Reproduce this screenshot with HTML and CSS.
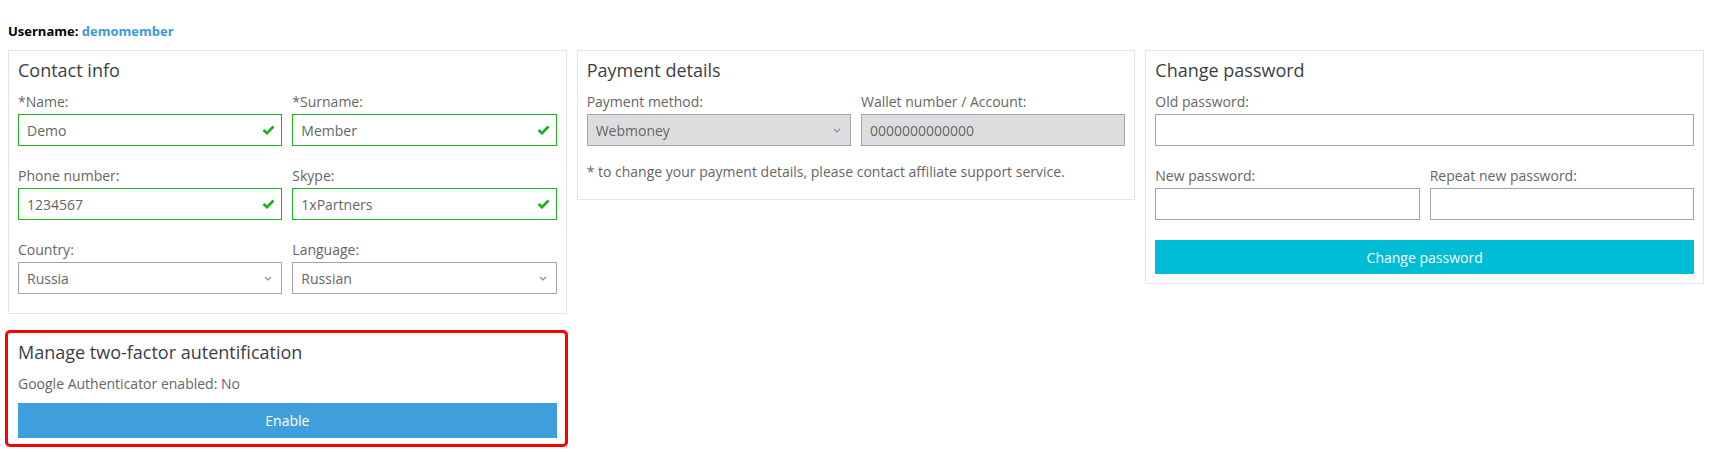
FILE: index.html
```html
<!DOCTYPE html>
<html lang="en">

<head>
  <meta charset="UTF-8">
  <meta name="viewport" content="width=device-width, initial-scale=1.0">
  <title>Profile</title>
  <link rel="stylesheet" href="styles.css">
</head>

<body>
  <div class="page">
    <div class="username"><b>Username:</b> <span class="login">demomember</span></div>

    <div class="columns">
      <div class="col">
        <div class="card">
          <h3>Contact info</h3>
          <div class="fields">
            <div class="field">
              <label for="name">*Name:</label>
              <div class="control valid">
                <input type="text" id="name" value="Demo">
                <svg class="check" width="13" height="10" viewBox="0 0 13 10"><path d="M1.5 5 L5 8.2 L11.5 1.5" /></svg>
              </div>
            </div>
            <div class="field">
              <label for="surname">*Surname:</label>
              <div class="control valid">
                <input type="text" id="surname" value="Member">
                <svg class="check" width="13" height="10" viewBox="0 0 13 10"><path d="M1.5 5 L5 8.2 L11.5 1.5" /></svg>
              </div>
            </div>
            <div class="field">
              <label for="phone">Phone number:</label>
              <div class="control valid">
                <input type="text" id="phone" value="1234567">
                <svg class="check" width="13" height="10" viewBox="0 0 13 10"><path d="M1.5 5 L5 8.2 L11.5 1.5" /></svg>
              </div>
            </div>
            <div class="field">
              <label for="skype">Skype:</label>
              <div class="control valid">
                <input type="text" id="skype" value="1xPartners">
                <svg class="check" width="13" height="10" viewBox="0 0 13 10"><path d="M1.5 5 L5 8.2 L11.5 1.5" /></svg>
              </div>
            </div>
            <div class="field">
              <label for="country">Country:</label>
              <div class="control">
                <select id="country"><option>Russia</option></select>
                <svg class="chevron" width="8" height="5" viewBox="0 0 8 5"><path d="M1 1 L4 4 L7 1" /></svg>
              </div>
            </div>
            <div class="field">
              <label for="language">Language:</label>
              <div class="control">
                <select id="language"><option>Russian</option></select>
                <svg class="chevron" width="8" height="5" viewBox="0 0 8 5"><path d="M1 1 L4 4 L7 1" /></svg>
              </div>
            </div>
          </div>
        </div>

        <div class="card card-2fa">
          <h3>Manage two-factor autentification</h3>
          <p class="status">Google Authenticator enabled: No</p>
          <button class="btn btn-blue">Enable</button>
        </div>
      </div>

      <div class="col">
        <div class="card card-payment">
          <h3>Payment details</h3>
          <div class="fields">
            <div class="field">
              <label for="method">Payment method:</label>
              <div class="control">
                <select id="method" disabled><option>Webmoney</option></select>
                <svg class="chevron" width="8" height="5" viewBox="0 0 8 5"><path d="M1 1 L4 4 L7 1" /></svg>
              </div>
            </div>
            <div class="field">
              <label for="wallet">Wallet number / Account:</label>
              <div class="control">
                <input type="text" id="wallet" value="0000000000000" disabled>
              </div>
            </div>
          </div>
          <p class="note">* to change your payment details, please contact affiliate support service.</p>
        </div>
      </div>

      <div class="col">
        <div class="card">
          <h3>Change password</h3>
          <div class="fields">
            <div class="field wide">
              <label for="old-pass">Old password:</label>
              <div class="control"><input type="password" id="old-pass"></div>
            </div>
            <div class="field">
              <label for="new-pass">New password:</label>
              <div class="control"><input type="password" id="new-pass"></div>
            </div>
            <div class="field">
              <label for="repeat-pass">Repeat new password:</label>
              <div class="control"><input type="password" id="repeat-pass"></div>
            </div>
          </div>
          <button class="btn btn-cyan">Change password</button>
        </div>
      </div>
    </div>
  </div>
</body>

</html>
```

FILE: styles.css
```css
* {
  box-sizing: border-box;
  margin: 0;
  padding: 0;
  font-family: 'Open Sans', 'Liberation Sans', sans-serif;
}

body {
  background-color: #fff;
  color: #666;
  font-size: 14px;
  line-height: 20px;
}

.page {
  padding: 22px 5px 0 8px;
}

.username {
  font-size: 13px;
  line-height: 18px;
  color: #000;
  margin-bottom: 10px;
}

.username b,
.username .login {
  font-weight: 700;
}

.username .login {
  color: #3a9ad9;
}

.columns {
  display: grid;
  grid-template-columns: 1fr 1fr 1fr;
  gap: 10px;
  align-items: start;
}

.card {
  border: 1px solid #e6e6e6;
  padding: 6px 9px 19px;
  background-color: #fff;
}

.card h3 {
  font-size: 18px;
  line-height: 26px;
  font-weight: 400;
  color: #3b3f45;
  margin-bottom: 9px;
}

.fields {
  display: grid;
  grid-template-columns: 1fr 1fr;
  column-gap: 10px;
  row-gap: 20px;
}

.field.wide {
  grid-column: 1 / 3;
}

label {
  display: block;
  color: #666;
  margin-bottom: 2px;
}

.control {
  position: relative;
}

input,
select {
  display: block;
  width: 100%;
  height: 32px;
  padding: 0 8px;
  border: 1px solid #a4a4a4;
  border-radius: 0;
  background-color: #fff;
  color: #666;
  font-size: 14px;
  outline: none;
  appearance: none;
}

input:disabled,
select:disabled {
  background-color: #dcdddf;
  color: #666;
  opacity: 1;
}

.valid input {
  border-color: #1db41d;
}

.check {
  position: absolute;
  right: 7px;
  top: 11px;
  fill: none;
  stroke: #19b019;
  stroke-width: 2.6;
}

.chevron {
  position: absolute;
  right: 10px;
  top: 14px;
  fill: none;
  stroke: #7d8fa6;
  stroke-width: 1.2;
}

.card-payment {
  padding-bottom: 17px;
}

.note {
  margin-top: 16px;
  color: #666;
}

.btn {
  display: block;
  width: 100%;
  height: 34px;
  margin-top: 20px;
  border: none;
  color: #fff;
  font-size: 14px;
  cursor: pointer;
}

.btn-cyan {
  background-color: #00bcd4;
}

.btn-blue {
  background-color: #3f9fdc;
  height: 35px;
  margin-top: 0;
}

.card:last-child .btn-cyan {
  margin-bottom: -10px;
}

.card-2fa {
  margin: 16px -1px 0 -3px;
  border: 3px solid #ff0000;
  border-radius: 5px;
  padding: 6px 8px 6px 10px;
}

.status {
  margin-bottom: 9px;
}
```
